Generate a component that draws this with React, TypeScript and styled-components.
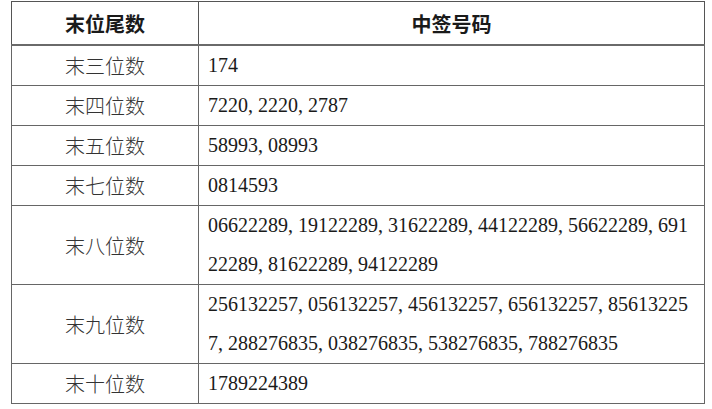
import React from 'react';
import styled, { createGlobalStyle } from 'styled-components';

const GlobalStyle = createGlobalStyle`
  html, body {
    margin: 0;
    padding: 0;
    background: #ffffff;
  }
`;

const Page = styled.div`
  padding: 1px 0 0 11px;
`;

const Table = styled.table`
  border-collapse: collapse;
  width: 694px;
  table-layout: fixed;
  color: #1a1a1a;
`;

const HeadCell = styled.th<{ $w?: number }>`
  width: ${({ $w }) => ($w ? `${$w}px` : 'auto')};
  height: 42px;
  padding: 0;
  border: 1px solid #555555;
  border-bottom: 2px solid #6a6a6a;
  font-family: 'Noto Sans CJK SC', 'Noto Sans', sans-serif;
  font-size: 20px;
  font-weight: 700;
  text-align: center;
  vertical-align: middle;
`;

const LabelCell = styled.td`
  padding: 0;
  border: 1px solid #666666;
  font-family: 'Noto Sans CJK SC', 'Noto Sans', sans-serif;
  font-size: 20px;
  font-weight: 300;
  color: #333333;
  text-align: center;
  vertical-align: middle;
  line-height: 39px;
`;

const NumberCell = styled.td`
  padding: 0 0 0 9px;
  border: 1px solid #666666;
  font-family: 'Liberation Serif', 'Times New Roman', serif;
  font-size: 20px;
  color: #1a1a1a;
  text-align: left;
  vertical-align: middle;
  line-height: 39px;
  white-space: nowrap;
`;

const Line = styled.div`
  height: 39px;
`;

type Row = { label: string; lines: string[] };

const rows: Row[] = [
  { label: '末三位数', lines: ['174'] },
  { label: '末四位数', lines: ['7220, 2220, 2787'] },
  { label: '末五位数', lines: ['58993, 08993'] },
  { label: '末七位数', lines: ['0814593'] },
  {
    label: '末八位数',
    lines: [
      '06622289, 19122289, 31622289, 44122289, 56622289, 691',
      '22289, 81622289, 94122289',
    ],
  },
  {
    label: '末九位数',
    lines: [
      '256132257, 056132257, 456132257, 656132257, 85613225',
      '7, 288276835, 038276835, 538276835, 788276835',
    ],
  },
  { label: '末十位数', lines: ['1789224389'] },
];

const App: React.FC = () => {
  return (
    <>
      <GlobalStyle />
      <Page>
        <Table>
          <thead>
            <tr>
              <HeadCell $w={186}>末位尾数</HeadCell>
              <HeadCell>中签号码</HeadCell>
            </tr>
          </thead>
          <tbody>
            {rows.map((row) => (
              <tr key={row.label}>
                <LabelCell>{row.label}</LabelCell>
                <NumberCell>
                  {row.lines.map((line) => (
                    <Line key={line}>{line}</Line>
                  ))}
                </NumberCell>
              </tr>
            ))}
          </tbody>
        </Table>
      </Page>
    </>
  );
};

export default App;
